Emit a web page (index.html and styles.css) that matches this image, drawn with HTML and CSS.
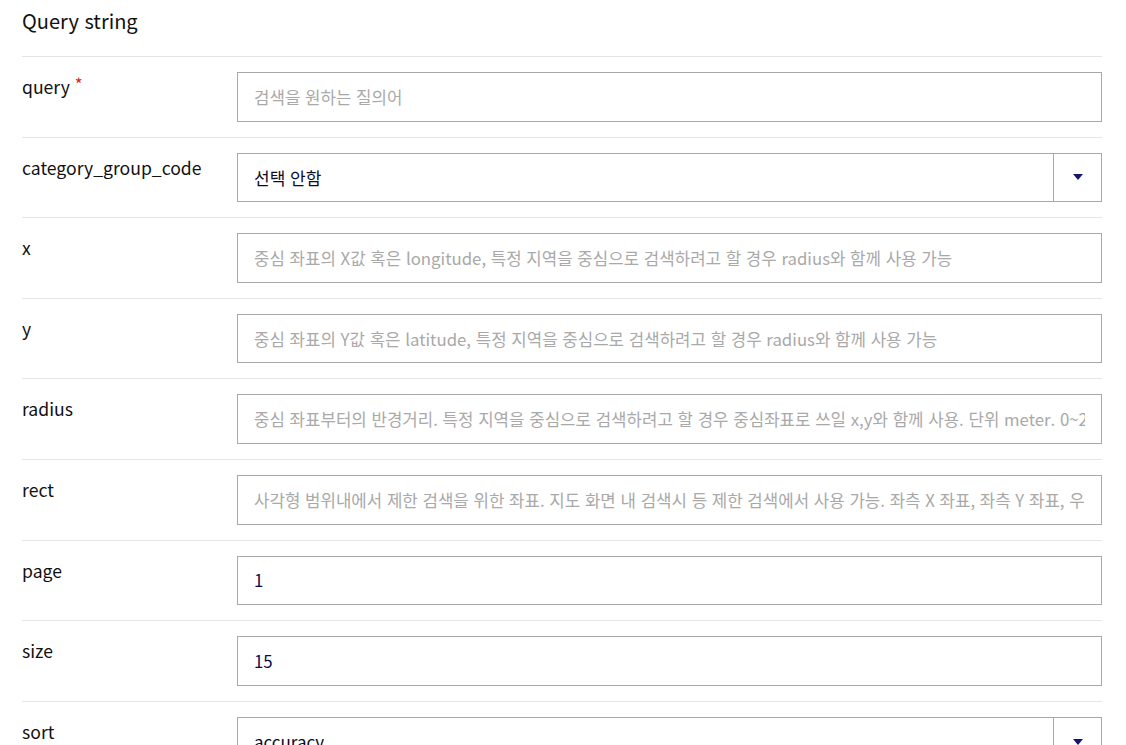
FILE: index.html
```html
<!DOCTYPE html>
<html lang="ko">
<head>
<meta charset="utf-8">
<title>Query string</title>
<link rel="stylesheet" href="styles.css">
</head>
<body>
<div class="panel">
  <h2 class="title">Query string</h2>
  <div class="row">
    <div class="label">query <span class="req">*</span></div>
    <div class="field"><input class="input" type="text" placeholder="검색을 원하는 질의어"></div>
  </div>
  <div class="row">
    <div class="label">category_group_code</div>
    <div class="field">
      <div class="select"><span class="select-text">선택 안함</span><span class="select-arrow"><span class="tri"></span></span></div>
    </div>
  </div>
  <div class="row">
    <div class="label">x</div>
    <div class="field"><input class="input" type="text" placeholder="중심 좌표의 X값 혹은 longitude, 특정 지역을 중심으로 검색하려고 할 경우 radius와 함께 사용 가능"></div>
  </div>
  <div class="row">
    <div class="label">y</div>
    <div class="field"><input class="input" type="text" placeholder="중심 좌표의 Y값 혹은 latitude, 특정 지역을 중심으로 검색하려고 할 경우 radius와 함께 사용 가능"></div>
  </div>
  <div class="row">
    <div class="label">radius</div>
    <div class="field"><input class="input" type="text" placeholder="중심 좌표부터의 반경거리. 특정 지역을 중심으로 검색하려고 할 경우 중심좌표로 쓰일 x,y와 함께 사용. 단위 meter. 0~20000 사이의 값"></div>
  </div>
  <div class="row">
    <div class="label">rect</div>
    <div class="field"><input class="input" type="text" placeholder="사각형 범위내에서 제한 검색을 위한 좌표. 지도 화면 내 검색시 등 제한 검색에서 사용 가능. 좌측 X 좌표, 좌측 Y 좌표, 우측 X 좌표, 우측 Y 좌표 형식"></div>
  </div>
  <div class="row">
    <div class="label">page</div>
    <div class="field"><input class="input" type="text" value="1"></div>
  </div>
  <div class="row">
    <div class="label">size</div>
    <div class="field"><input class="input" type="text" value="15"></div>
  </div>
  <div class="row">
    <div class="label">sort</div>
    <div class="field">
      <div class="select"><span class="select-text">accuracy</span><span class="select-arrow"><span class="tri"></span></span></div>
    </div>
  </div>
</div>
</body>
</html>
```
FILE: styles.css
```css
html, body {
  margin: 0;
  padding: 0;
  background: #fff;
  overflow: hidden;
}
body {
  font-family: "Noto Sans CJK KR", "Noto Sans", sans-serif;
  color: #111;
}
.panel {
  padding: 0 24px 0 22px;
}
.title {
  margin: 0;
  padding: 6px 0 20px;
  font-size: 20px;
  line-height: 30px;
  font-weight: 400;
  color: #111;
  border-bottom: 1px solid #e5e5e5;
}
.row {
  display: flex;
  padding: 15px 0;
  border-bottom: 1px solid #e5e5e5;
}
.label {
  width: 215px;
  flex: none;
  padding-top: 2px;
  font-size: 17.6px;
  line-height: 25px;
  font-weight: 400;
  color: #111;
}
.req {
  color: #e3262b;
  font-size: 17px;
  vertical-align: top;
  line-height: 20px;
}
.field {
  flex: 1;
  min-width: 0;
}
.input {
  display: block;
  box-sizing: border-box;
  width: 100%;
  height: 49.6px;
  margin: 0;
  padding: 0 16px;
  border: 1px solid #a8a8a8;
  border-radius: 0;
  font-family: "Noto Sans CJK KR", "Noto Sans", sans-serif;
  font-size: 16.8px;
  color: #0c0c4a;
  background: #fff;
  outline: none;
}
.input::placeholder {
  color: #a9a9a9;
  opacity: 1;
}
.select {
  display: flex;
  box-sizing: border-box;
  height: 49.6px;
  border: 1px solid #a8a8a8;
  background: #fff;
}
.select-text {
  flex: 1;
  display: flex;
  align-items: center;
  padding: 0 16px;
  font-size: 17px;
  color: #0c0c2a;
}
.select-arrow {
  flex: none;
  width: 47px;
  border-left: 1px solid #a8a8a8;
  display: flex;
  align-items: center;
  justify-content: center;
}
.tri {
  width: 0;
  height: 0;
  border-left: 5px solid transparent;
  border-right: 5px solid transparent;
  border-top: 6px solid #15166b;
}
```
